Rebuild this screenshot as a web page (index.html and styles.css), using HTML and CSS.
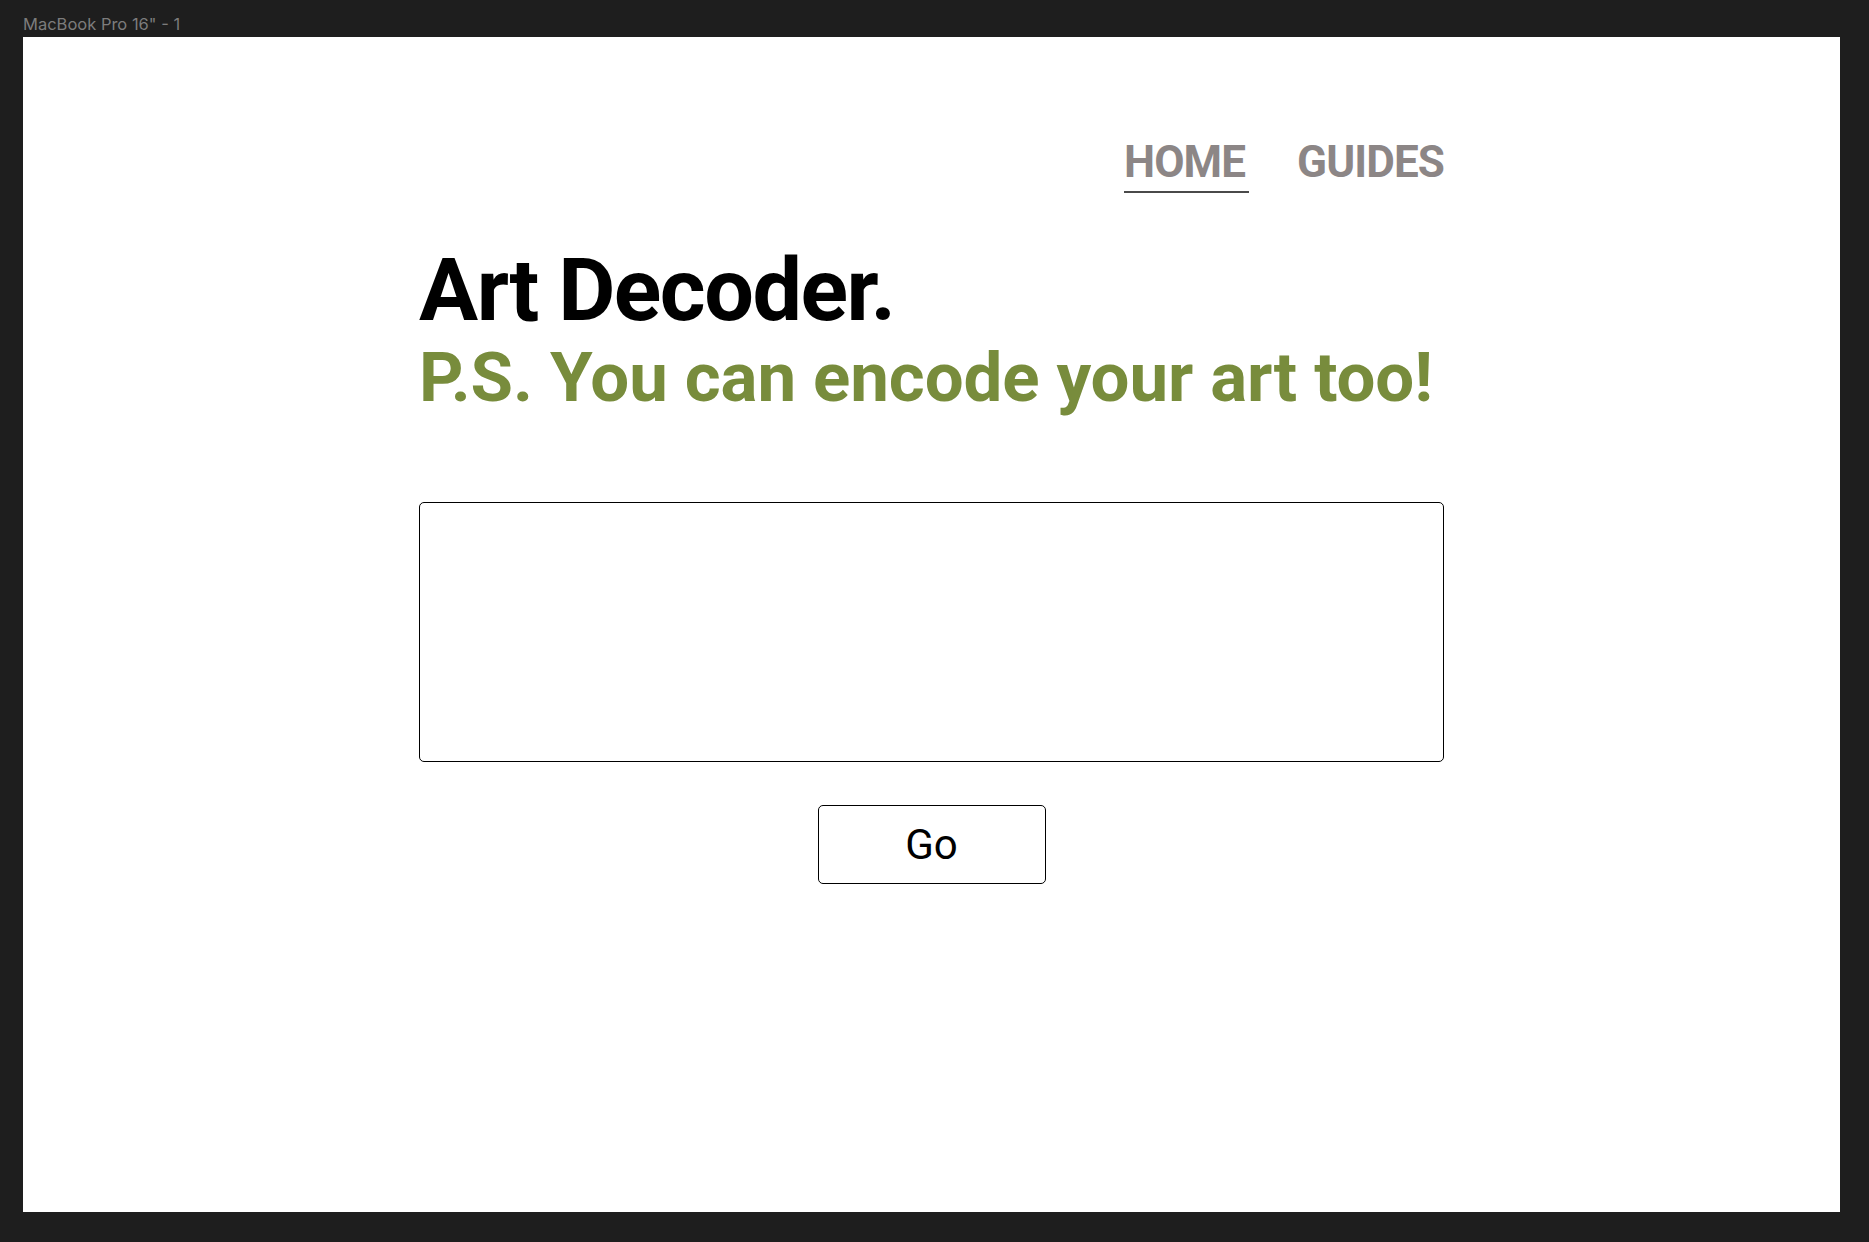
FILE: index.html
```html
<!DOCTYPE html>
<html lang="en">
<head>
<meta charset="utf-8">
<title>Art Decoder</title>
<link rel="stylesheet" href="styles.css">
</head>
<body>
<div class="artboard-label">MacBook Pro 16" - 1</div>
<div class="artboard">
  <div class="page">
    <nav class="nav">
      <a class="nav-link active" href="#">HOME</a>
      <a class="nav-link" href="#">GUIDES</a>
    </nav>
    <h1 class="title">Art Decoder.</h1>
    <h2 class="subtitle">P.S. You can encode your art too!</h2>
    <textarea class="input" aria-label="Art input"></textarea>
    <div class="actions">
      <button class="go" type="button">Go</button>
    </div>
  </div>
</div>
</body>
</html>
```
FILE: styles.css
```css
html, body {
  margin: 0;
  padding: 0;
}
body {
  background: #1e1e1e;
  font-family: Roboto, "Liberation Sans", sans-serif;
  width: 1869px;
  height: 1242px;
  overflow: hidden;
}
.artboard-label {
  height: 37px;
  padding-left: 23px;
  box-sizing: border-box;
  font-family: Inter, "Liberation Sans", sans-serif;
  font-size: 16.5px;
  line-height: 17px;
  padding-top: 16px;
  color: #7c7c7c;
}
.artboard {
  margin-left: 23px;
  width: 1817px;
  height: 1175px;
  background: #ffffff;
}
.page {
  width: 1025px;
  margin: 0 auto;
  padding-top: 103px;
  display: flex;
  flex-direction: column;
}
.nav {
  display: flex;
  justify-content: flex-end;
  gap: 48px;
}
.nav-link {
  font-size: 44px;
  line-height: 1;
  font-weight: 700;
  color: #8c8686;
  text-decoration: none;
  letter-spacing: -0.9px;
  padding-bottom: 7px;
  border-bottom: 2px solid transparent;
}
.nav-link.active {
  border-bottom-color: #4a4a4a;
  padding-right: 4px;
}
.title {
  margin: 53px 0 0 0;
  font-size: 88px;
  line-height: 1;
  font-weight: 700;
  color: #000000;
  letter-spacing: -1.5px;
}
.subtitle {
  margin: 9px 0 0 0;
  font-size: 69px;
  line-height: 1;
  font-weight: 700;
  color: #788c3c;
  letter-spacing: -0.1px;
}
.input {
  display: block;
  margin-top: 90px;
  width: 100%;
  height: 260px;
  box-sizing: border-box;
  border: 1px solid #000000;
  border-radius: 5px;
  resize: none;
  font-family: Roboto, sans-serif;
  font-size: 20px;
  padding: 12px;
}
.actions {
  display: flex;
  justify-content: center;
  margin-top: 43px;
}
.go {
  width: 228px;
  height: 79px;
  box-sizing: border-box;
  border: 1px solid #000000;
  border-radius: 5px;
  background: #ffffff;
  font-family: Roboto, sans-serif;
  font-size: 42px;
  line-height: 1;
  color: #000000;
  display: flex;
  align-items: center;
  justify-content: center;
  padding: 0;
}
```
